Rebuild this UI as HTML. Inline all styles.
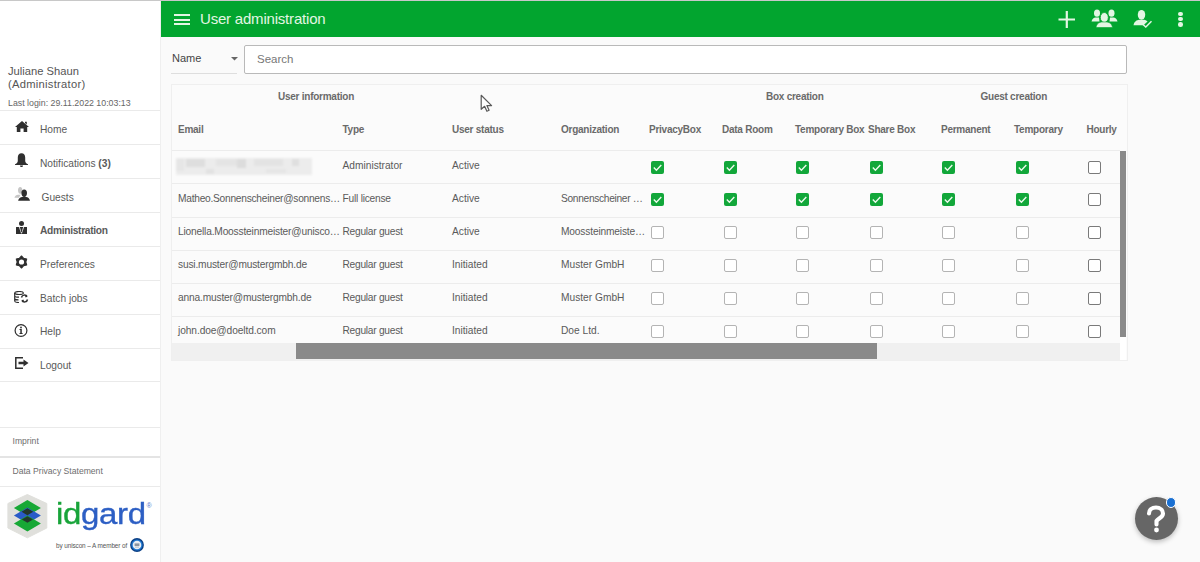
<!DOCTYPE html>
<html><head><meta charset="utf-8">
<style>
*{box-sizing:border-box;margin:0;padding:0}
html,body{width:1200px;height:562px;overflow:hidden;background:#fafafa;font-family:"Liberation Sans",sans-serif;color:#555}
.abs{position:absolute}
#topline{position:absolute;left:0;top:0;width:1200px;height:1px;background:#c8c8c8}
#side{position:absolute;left:0;top:1px;width:161px;height:561px;background:#fff;border-right:1px solid #efefef}
#hdr{position:absolute;left:161px;top:1px;width:1039px;height:36px;background:#02a52f}
.t{position:absolute;white-space:nowrap;line-height:1}
.t b{font-weight:bold}
.hl{position:absolute;left:0;width:160px;height:1px;background:#eaeaea}
.mi{font-size:10.2px;color:#5a5a5a}
.ic{position:absolute}
#tbl{position:absolute;left:171px;top:84px;width:957px;height:277px;background:#fbfbfb;border:1px solid #efefef}
.th{position:absolute;top:125px;font-size:10px;font-weight:bold;color:#6a6a6a;letter-spacing:-0.25px;line-height:1;white-space:nowrap}
.gh{position:absolute;top:91.5px;font-size:10px;font-weight:bold;color:#6a6a6a;letter-spacing:-0.25px;line-height:1;white-space:nowrap}
.rl{position:absolute;left:172px;width:948px;height:1px;background:#ececec}
.td{position:absolute;font-size:10.2px;color:#5a5a5a;line-height:1;white-space:nowrap}
.cb{position:absolute;width:13px;height:13px;border-radius:2px}
.cb.on{background:#12a73a}
.cb.on svg{position:absolute;left:0;top:0}
.cb.off{border:1.5px solid #b4b4b4;background:#fff}
.cb.dk{border:1.5px solid #7a7a7a;background:#fff}
</style></head><body>
<div id="topline"></div>
<div id="side"></div>
<div class="t" style="left:8px;top:64.5px;font-size:11.2px;color:#555;line-height:13.5px">Juliane Shaun<br><span style="letter-spacing:0.27px">(Administrator)</span></div>
<div class="t" style="left:8px;top:99px;font-size:8.8px;color:#666">Last login: 29.11.2022 10:03:13</div>
<div class="hl" style="top:110px"></div>
<div class="hl" style="top:144px"></div>
<div class="hl" style="top:178px"></div>
<div class="hl" style="top:212px"></div>
<div class="hl" style="top:246px"></div>
<div class="hl" style="top:280px"></div>
<div class="hl" style="top:314px"></div>
<div class="hl" style="top:348px"></div>
<div class="hl" style="top:381px"></div>
<div class="hl" style="top:427px"></div>
<div class="hl" style="top:456px;height:2px;background:#e4e4e4"></div>
<div class="hl" style="top:486px"></div>
<div class="t mi" style="left:40px;top:125px">Home</div>
<div class="t mi" style="left:40px;top:158.5px">Notifications <b>(3)</b></div>
<div class="t mi" style="left:41.5px;top:192.5px">Guests</div>
<div class="t mi" style="left:40px;top:226px"><b style="letter-spacing:-0.3px">Administration</b></div>
<div class="t mi" style="left:40px;top:260px">Preferences</div>
<div class="t mi" style="left:40px;top:293.5px">Batch jobs</div>
<div class="t mi" style="left:40px;top:327px">Help</div>
<div class="t mi" style="left:40px;top:361px">Logout</div>
<div class="t" style="left:12.5px;top:437px;font-size:8.6px;color:#6e6e6e">Imprint</div>
<div class="t" style="left:12.5px;top:466.5px;font-size:8.6px;color:#6e6e6e">Data Privacy Statement</div>
<svg class="ic" style="left:15px;top:121px" width="14" height="11" viewBox="0 0 14 11"><path d="M7 0 L14 6 L12.2 6 L12.2 11 L8.6 11 L8.6 7.5 L5.4 7.5 L5.4 11 L1.8 11 L1.8 6 L0 6 Z M10 0.8 L11.8 0.8 L11.8 3.5 L10 2 Z" fill="#2f2f2f"/></svg>
<svg class="ic" style="left:15px;top:153px" width="13" height="14" viewBox="0 0 13 14"><path d="M6.5 0.3 C9 0.3 10.2 2.2 10.2 4.5 L10.2 8 C10.2 9.5 11.5 10.5 13 11.3 L13 12 L0 12 L0 11.3 C1.5 10.5 2.8 9.5 2.8 8 L2.8 4.5 C2.8 2.2 4 0.3 6.5 0.3 Z M5 12.4 L8 12.4 C8 13.3 7.3 14 6.5 14 C5.7 14 5 13.3 5 12.4Z" fill="#2f2f2f"/></svg>
<svg class="ic" style="left:14px;top:186px" width="17" height="15" viewBox="0 0 17 15"><path d="M6.2 1 C7.6 1 8.4 2.3 8.4 4.2 C8.4 6 7.6 7.8 6.2 7.8 C4.8 7.8 4 6 4 4.2 C4 2.3 4.8 1 6.2 1Z M0.4 11.8 C1 9.8 2.5 9 4 8.8 L6.5 8.8 L5 11.8 Z" fill="#c6c6c6"/><path d="M10.2 3.4 C12 3.4 13 4.8 13 6.9 C13 9 12 10.9 10.2 10.9 C8.4 10.9 7.4 9 7.4 6.9 C7.4 4.8 8.4 3.4 10.2 3.4Z M4.1 14.8 C4.5 12.2 6.5 11.2 8.2 11 L12.2 11 C13.9 11.2 15.6 12.2 16 14.8 Z" fill="#2f2f2f"/></svg>
<svg class="ic" style="left:16px;top:220.5px" width="11" height="13" viewBox="0 0 11 13"><circle cx="5.5" cy="2.5" r="2.5" fill="#2f2f2f"/><path d="M0 6.2 L0.3 6 L11 6 L11 13 L0 13 Z" fill="#2f2f2f"/><path d="M3.3 6 L5.5 12.3 L7.7 6" fill="none" stroke="#fff" stroke-width="0.8"/><path d="M4.9 6.2 L6.1 6.2 L5.9 7.6 L6.2 10 L5.5 11.3 L4.8 10 L5.1 7.6Z" fill="#2f2f2f"/></svg>
<svg class="ic" style="left:15px;top:255px" width="13" height="14" viewBox="-6.5 -7 13 14"><path d="M0.00 -6.00 L2.15 -3.72 L5.20 -3.00 L4.30 0.00 L5.20 3.00 L2.15 3.72 L0.00 6.00 L-2.15 3.72 L-5.20 3.00 L-4.30 0.00 L-5.20 -3.00 L-2.15 -3.72Z" fill="#2f2f2f" stroke="#2f2f2f" stroke-width="1.1" stroke-linejoin="round"/><circle r="2.6" fill="#fff"/></svg>
<svg class="ic" style="left:14px;top:291px" width="15" height="12" viewBox="0 0 15 12" fill="none" stroke="#2f2f2f" stroke-width="1.2"><ellipse cx="5" cy="2" rx="4.3" ry="1.5"/><path d="M0.7 2 L0.7 10 C0.7 11 2.5 11.5 5 11.5 M0.7 4.7 C0.7 5.6 2.5 6.2 5 6.2 M0.7 7.4 C0.7 8.3 2.5 8.8 4.5 8.8"/><path d="M7.5 6.5 A3 3 0 0 1 13 5.5 M13.5 8.5 A3 3 0 0 1 8 9.5" stroke-width="1.5"/><path d="M12 3.5 L13.5 6 L11 6.2Z M9 11.5 L7.5 9 L10 8.8Z" fill="#2f2f2f" stroke="none"/></svg>
<svg class="ic" style="left:14px;top:324px" width="14" height="13" viewBox="0 0 14 13"><circle cx="7" cy="6.5" r="5.9" fill="none" stroke="#2f2f2f" stroke-width="1.2"/><circle cx="7" cy="3.5" r="0.9" fill="#2f2f2f"/><path d="M5.5 5 L7.8 5 L7.8 9 L8.6 9 L8.6 10 L5.5 10 L5.5 9 L6.3 9 L6.3 6 L5.5 6Z" fill="#2f2f2f"/></svg>
<svg class="ic" style="left:14.5px;top:357px" width="14" height="12" viewBox="0 0 14 12"><path d="M8 0.7 L0.8 0.7 L0.8 11.3 L8 11.3" fill="none" stroke="#2f2f2f" stroke-width="1.5"/><path d="M3.5 4.8 L8.5 4.8 L8.5 2.5 L13.5 6 L8.5 9.5 L8.5 7.2 L3.5 7.2Z" fill="#2f2f2f"/></svg>
<svg class="ic" style="left:7px;top:493px" width="42" height="47" viewBox="0 0 42 47"><path d="M20.35 1.5 L39.8 10.5 L39.8 35 L20.35 44.8 L0.9 35 L0.9 10.5Z" fill="#e0e0dc" stroke="#e0e0dc" stroke-width="1" stroke-linejoin="round"/><path d="M20.4 7 L33.9 15 L20.4 23 L6.899999999999999 15Z" fill="#17a835"/><path d="M20.4 14.5 L33.9 22.5 L20.4 30.5 L6.899999999999999 22.5Z" fill="#2a5bc8"/><path d="M20.4 22.5 L33.9 30.5 L20.4 38.5 L6.899999999999999 30.5Z" fill="#17a835"/><path d="M20.4 15.3 L26.2 18.8 L20.4 22.3 L14.6 18.8Z" fill="#24382c"/><path d="M20.4 23.2 L26 26.5 L20.4 29.8 L14.8 26.5Z" fill="#24382c"/></svg>
<div class="t" style="left:56px;top:498.5px;font-size:30px;letter-spacing:-0.3px;-webkit-text-stroke:0.35px currentColor;transform:scaleX(1.1);transform-origin:0 0"><span style="color:#18a43a;-webkit-text-stroke:0.35px #18a43a">id</span><span style="color:#2d5fc4;-webkit-text-stroke:0.35px #2d5fc4">gard</span></div>
<div class="t" style="left:146.5px;top:502px;font-size:7px;color:#5577cc">®</div>
<div class="t" style="left:56px;top:542.8px;font-size:6.4px;color:#555;letter-spacing:-0.1px">by uniscon – A member of</div>
<svg class="ic" style="left:130px;top:538px" width="14" height="14" viewBox="0 0 14 14"><circle cx="7" cy="7" r="6.9" fill="#0b3f84"/><circle cx="7" cy="7" r="5.6" fill="#1f78d2"/><circle cx="7" cy="7" r="4.3" fill="#e9eef4"/><rect x="4.6" y="5.4" width="4.8" height="2.6" fill="#8a94a0"/><rect x="5" y="8.6" width="4" height="1" fill="#b8c0c8"/></svg>
<div id="hdr"></div>
<div class="abs" style="left:174px;top:14px;width:16px;height:2px;background:#e3f6e3"></div>
<div class="abs" style="left:174px;top:18.5px;width:16px;height:2px;background:#e3f6e3"></div>
<div class="abs" style="left:174px;top:23px;width:16px;height:2px;background:#e3f6e3"></div>
<div class="t" style="left:200px;top:11px;font-size:15px;color:#e3f6e3;letter-spacing:-0.2px">User administration</div>
<svg class="ic" style="left:1058px;top:11px" width="18" height="17" viewBox="0 0 18 17"><path d="M0.5 8.5 L17 8.5 M8.8 0 L8.8 17" stroke="#e3f6e3" stroke-width="2.2"/></svg>
<svg class="ic" style="left:1091px;top:9px" width="27" height="19" viewBox="0 0 27 19"><ellipse cx="6" cy="4.2" rx="3" ry="3.6" fill="#e3f6e3"/><path d="M0.5 12.5 C1 9.5 3 8.7 4.5 8.5 L8 8.5 L8.5 12.5Z" fill="#e3f6e3"/><ellipse cx="20.5" cy="4.2" rx="3" ry="3.6" fill="#e3f6e3"/><path d="M26.5 12.5 C26 9.5 24 8.7 22.5 8.5 L19 8.5 L18.5 12.5Z" fill="#e3f6e3"/><ellipse cx="13.3" cy="8.5" rx="4" ry="5" fill="#e3f6e3" stroke="#02a52f" stroke-width="0.8"/><path d="M5 18.5 C5.5 14.5 8.5 13.3 10.5 13 L16 13 C18 13.3 21 14.5 21.5 18.5Z" fill="#e3f6e3" stroke="#02a52f" stroke-width="0.6"/></svg>
<svg class="ic" style="left:1133px;top:9px" width="20" height="19" viewBox="0 0 20 19"><ellipse cx="8.5" cy="5.8" rx="3.7" ry="4.9" fill="#e3f6e3"/><path d="M0.5 16.3 C1 12.5 4 11 6 10.8 L11 10.8 C12.5 11 14 11.8 14.5 12.5 L10.5 16.3Z" fill="#e3f6e3"/><path d="M10 15.5 L12.8 18 L18.5 12.3" fill="none" stroke="#e3f6e3" stroke-width="1.5"/></svg>
<div class="abs" style="left:1178px;top:11.5px;width:4.6px;height:4.6px;border-radius:50%;background:#e3f6e3"></div>
<div class="abs" style="left:1178px;top:16.9px;width:4.6px;height:4.6px;border-radius:50%;background:#e3f6e3"></div>
<div class="abs" style="left:1178px;top:22.4px;width:4.6px;height:4.6px;border-radius:50%;background:#e3f6e3"></div>
<div class="t" style="left:172px;top:53.3px;font-size:11px;color:#444">Name</div>
<svg class="ic" style="left:231px;top:57px" width="7" height="4" viewBox="0 0 7 4"><path d="M0 0 L7 0 L3.5 3.5Z" fill="#666"/></svg>
<div class="abs" style="left:171px;top:73px;width:66px;height:1px;background:#dedede"></div>
<div class="abs" style="left:244px;top:45px;width:883px;height:29px;border:1px solid #b9b9b9;border-radius:2px;background:#fff"></div>
<div class="t" style="left:257px;top:53.8px;font-size:11.5px;color:#777">Search</div>
<div id="tbl"></div>
<div class="gh" style="left:278px">User information</div>
<div class="gh" style="left:766px">Box creation</div>
<div class="gh" style="left:980.5px">Guest creation</div>
<div class="th" style="left:178px">Email</div>
<div class="th" style="left:342.5px">Type</div>
<div class="th" style="left:452px">User status</div>
<div class="th" style="left:561px">Organization</div>
<div class="th" style="left:649px">PrivacyBox</div>
<div class="th" style="left:722px">Data Room</div>
<div class="th" style="left:795px">Temporary Box</div>
<div class="th" style="left:868px">Share Box</div>
<div class="th" style="left:941px">Permanent</div>
<div class="th" style="left:1014px">Temporary</div>
<div class="th" style="left:1086.5px">Hourly</div>
<div class="rl" style="top:150px"></div>
<div class="rl" style="top:183px"></div>
<div class="rl" style="top:216.5px"></div>
<div class="rl" style="top:249.5px"></div>
<div class="rl" style="top:282.5px"></div>
<div class="rl" style="top:315.5px"></div>
<div class="abs" style="left:176px;top:158px;width:136px;height:16.5px;background:#ececec;filter:blur(1px)"><div class="abs" style="left:10px;top:0.5px;width:19px;height:8.5px;background:#dedede"></div><div class="abs" style="left:40px;top:1px;width:30px;height:7px;background:#e4e4e4"></div><div class="abs" style="left:61px;top:0.5px;width:9px;height:9px;background:#dcdcdc"></div><div class="abs" style="left:78px;top:1px;width:29px;height:7px;background:#e3e3e3"></div><div class="abs" style="left:116px;top:1px;width:7px;height:7px;background:#dfdfdf"></div><div class="abs" style="left:30px;top:11px;width:8px;height:5px;background:#e2e2e2"></div><div class="abs" style="left:0px;top:1px;width:8px;height:12px;background:#e6e6e6"></div><div class="abs" style="left:90px;top:11px;width:20px;height:4px;background:#e6e6e6"></div></div>
<div class="td" style="left:342.5px;top:160.5px;">Administrator</div>
<div class="td" style="left:452px;top:160.5px">Active</div>
<div class="cb on" style="left:650.5px;top:161px"><svg width="13" height="13" viewBox="0 0 13 13"><path d="M2.8 6.6 L5.4 9.2 L10.3 4" fill="none" stroke="#eefaee" stroke-width="1.4"/></svg></div>
<div class="cb on" style="left:723.5px;top:161px"><svg width="13" height="13" viewBox="0 0 13 13"><path d="M2.8 6.6 L5.4 9.2 L10.3 4" fill="none" stroke="#eefaee" stroke-width="1.4"/></svg></div>
<div class="cb on" style="left:796px;top:161px"><svg width="13" height="13" viewBox="0 0 13 13"><path d="M2.8 6.6 L5.4 9.2 L10.3 4" fill="none" stroke="#eefaee" stroke-width="1.4"/></svg></div>
<div class="cb on" style="left:869.5px;top:161px"><svg width="13" height="13" viewBox="0 0 13 13"><path d="M2.8 6.6 L5.4 9.2 L10.3 4" fill="none" stroke="#eefaee" stroke-width="1.4"/></svg></div>
<div class="cb on" style="left:942px;top:161px"><svg width="13" height="13" viewBox="0 0 13 13"><path d="M2.8 6.6 L5.4 9.2 L10.3 4" fill="none" stroke="#eefaee" stroke-width="1.4"/></svg></div>
<div class="cb on" style="left:1015.5px;top:161px"><svg width="13" height="13" viewBox="0 0 13 13"><path d="M2.8 6.6 L5.4 9.2 L10.3 4" fill="none" stroke="#eefaee" stroke-width="1.4"/></svg></div>
<div class="cb dk" style="left:1088px;top:161px"></div>
<div class="td" style="left:178px;top:193.5px;letter-spacing:-0.25px;">Matheo.Sonnenscheiner@sonnens…</div>
<div class="td" style="left:342.5px;top:193.5px;letter-spacing:-0.22px;">Full license</div>
<div class="td" style="left:452px;top:193.5px">Active</div>
<div class="td" style="left:561px;top:193.5px;letter-spacing:-0.31px;">Sonnenscheiner …</div>
<div class="cb on" style="left:650.5px;top:193px"><svg width="13" height="13" viewBox="0 0 13 13"><path d="M2.8 6.6 L5.4 9.2 L10.3 4" fill="none" stroke="#eefaee" stroke-width="1.4"/></svg></div>
<div class="cb on" style="left:723.5px;top:193px"><svg width="13" height="13" viewBox="0 0 13 13"><path d="M2.8 6.6 L5.4 9.2 L10.3 4" fill="none" stroke="#eefaee" stroke-width="1.4"/></svg></div>
<div class="cb on" style="left:796px;top:193px"><svg width="13" height="13" viewBox="0 0 13 13"><path d="M2.8 6.6 L5.4 9.2 L10.3 4" fill="none" stroke="#eefaee" stroke-width="1.4"/></svg></div>
<div class="cb on" style="left:869.5px;top:193px"><svg width="13" height="13" viewBox="0 0 13 13"><path d="M2.8 6.6 L5.4 9.2 L10.3 4" fill="none" stroke="#eefaee" stroke-width="1.4"/></svg></div>
<div class="cb on" style="left:942px;top:193px"><svg width="13" height="13" viewBox="0 0 13 13"><path d="M2.8 6.6 L5.4 9.2 L10.3 4" fill="none" stroke="#eefaee" stroke-width="1.4"/></svg></div>
<div class="cb on" style="left:1015.5px;top:193px"><svg width="13" height="13" viewBox="0 0 13 13"><path d="M2.8 6.6 L5.4 9.2 L10.3 4" fill="none" stroke="#eefaee" stroke-width="1.4"/></svg></div>
<div class="cb dk" style="left:1088px;top:193px"></div>
<div class="td" style="left:178px;top:226.5px;letter-spacing:-0.18px;">Lionella.Moossteinmeister@unisco…</div>
<div class="td" style="left:342.5px;top:226.5px;letter-spacing:-0.26px;">Regular guest</div>
<div class="td" style="left:452px;top:226.5px">Active</div>
<div class="td" style="left:561px;top:226.5px;letter-spacing:-0.16px;">Moossteinmeiste…</div>
<div class="cb off" style="left:650.5px;top:226px"></div>
<div class="cb off" style="left:723.5px;top:226px"></div>
<div class="cb off" style="left:796px;top:226px"></div>
<div class="cb off" style="left:869.5px;top:226px"></div>
<div class="cb off" style="left:942px;top:226px"></div>
<div class="cb off" style="left:1015.5px;top:226px"></div>
<div class="cb dk" style="left:1088px;top:226px"></div>
<div class="td" style="left:178px;top:259.5px;letter-spacing:-0.17px;">susi.muster@mustergmbh.de</div>
<div class="td" style="left:342.5px;top:259.5px;letter-spacing:-0.26px;">Regular guest</div>
<div class="td" style="left:452px;top:259.5px">Initiated</div>
<div class="td" style="left:561px;top:259.5px;">Muster GmbH</div>
<div class="cb off" style="left:650.5px;top:259px"></div>
<div class="cb off" style="left:723.5px;top:259px"></div>
<div class="cb off" style="left:796px;top:259px"></div>
<div class="cb off" style="left:869.5px;top:259px"></div>
<div class="cb off" style="left:942px;top:259px"></div>
<div class="cb off" style="left:1015.5px;top:259px"></div>
<div class="cb dk" style="left:1088px;top:259px"></div>
<div class="td" style="left:178px;top:292.5px;letter-spacing:-0.17px;">anna.muster@mustergmbh.de</div>
<div class="td" style="left:342.5px;top:292.5px;letter-spacing:-0.26px;">Regular guest</div>
<div class="td" style="left:452px;top:292.5px">Initiated</div>
<div class="td" style="left:561px;top:292.5px;">Muster GmbH</div>
<div class="cb off" style="left:650.5px;top:292px"></div>
<div class="cb off" style="left:723.5px;top:292px"></div>
<div class="cb off" style="left:796px;top:292px"></div>
<div class="cb off" style="left:869.5px;top:292px"></div>
<div class="cb off" style="left:942px;top:292px"></div>
<div class="cb off" style="left:1015.5px;top:292px"></div>
<div class="cb dk" style="left:1088px;top:292px"></div>
<div class="td" style="left:178px;top:325.5px;letter-spacing:-0.09px;">john.doe@doeltd.com</div>
<div class="td" style="left:342.5px;top:325.5px;letter-spacing:-0.26px;">Regular guest</div>
<div class="td" style="left:452px;top:325.5px">Initiated</div>
<div class="td" style="left:561px;top:325.5px;">Doe Ltd.</div>
<div class="cb off" style="left:650.5px;top:325px"></div>
<div class="cb off" style="left:723.5px;top:325px"></div>
<div class="cb off" style="left:796px;top:325px"></div>
<div class="cb off" style="left:869.5px;top:325px"></div>
<div class="cb off" style="left:942px;top:325px"></div>
<div class="cb off" style="left:1015.5px;top:325px"></div>
<div class="cb dk" style="left:1088px;top:325px"></div>
<div class="abs" style="left:172px;top:343px;width:948px;height:17px;background:#f0f0f0"></div>
<div class="abs" style="left:296px;top:343px;width:581px;height:16px;background:#8a8a8a"></div>
<div class="abs" style="left:1120px;top:151px;width:6px;height:186px;background:#8a8a8a"></div>
<div class="abs" style="left:1120px;top:337px;width:6px;height:23px;background:#fff"></div>
<svg class="ic" style="left:480px;top:94px" width="15" height="19" viewBox="0 0 15 19"><path d="M1.2 1.3 L1.2 15.3 L4.6 12.3 L6.9 17.3 L9.1 16.3 L6.9 11.6 L11.6 11.6 Z" fill="#fff" stroke="#5a5a5a" stroke-width="1.2" stroke-linejoin="round"/></svg>
<div class="abs" style="left:1135px;top:497px;width:43px;height:43px;border-radius:50%;background:#666;box-shadow:0 2px 5px rgba(0,0,0,0.25)"></div>
<svg class="ic" style="left:1145px;top:505px" width="23" height="29" viewBox="0 0 23 29"><path d="M4 8.5 C4 4.5 7 2.5 11 2.5 C15 2.5 18 5 18 8.5 C18 12.5 13.5 13 11.5 16 L11.5 19.5" fill="none" stroke="#fff" stroke-width="4.1" stroke-linecap="round"/><circle cx="11.5" cy="25" r="2.4" fill="#fff"/></svg>
<div class="abs" style="left:1165.5px;top:497px;width:10.5px;height:10.5px;border-radius:50%;background:#1a70d2;border:1.2px solid #fff"></div>
</body></html>
